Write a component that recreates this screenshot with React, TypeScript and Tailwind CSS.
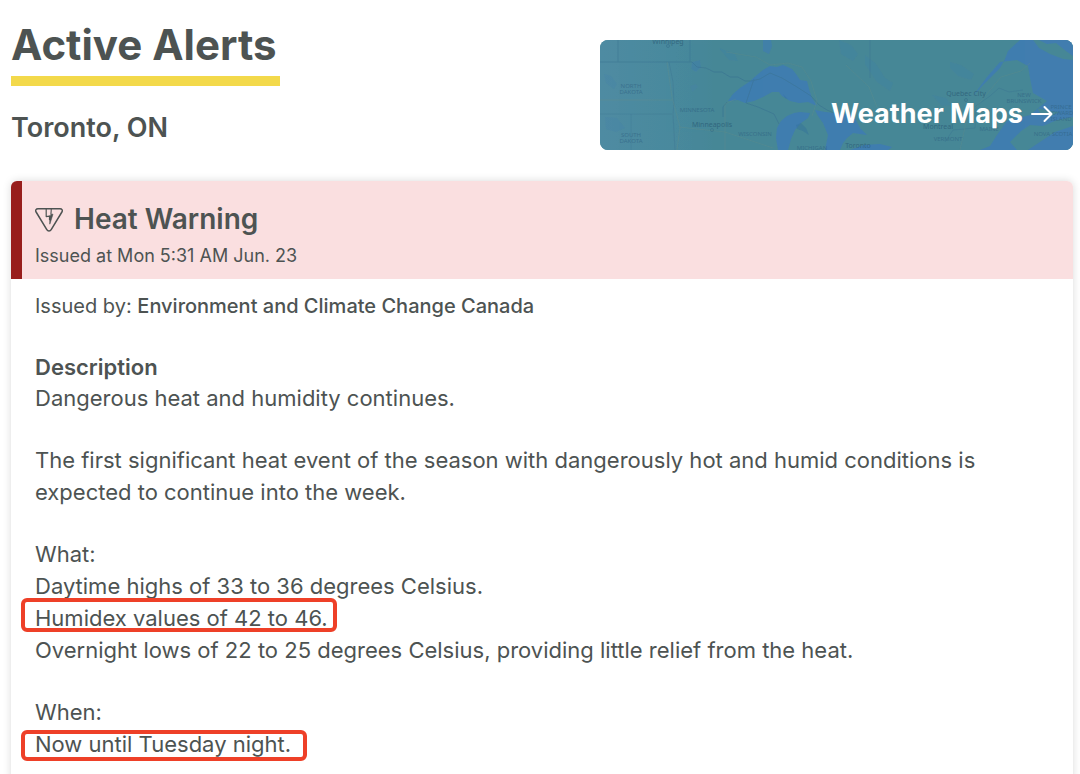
type AlertSection = {
  id: string;
  lines: { text: string; marked?: string }[];
};

const sections: AlertSection[] = [
  {
    id: "event",
    lines: [
      {
        text: "The first significant heat event of the season with dangerously hot and humid conditions is expected to continue into the week.",
      },
    ],
  },
  {
    id: "what",
    lines: [
      { text: "What:" },
      { text: "Daytime highs of 33 to 36 degrees Celsius." },
      {
        text: "Humidex values of 42 to 46.",
        marked: "-top-1 bottom-0.5 w-[316px]",
      },
      {
        text: "Overnight lows of 22 to 25 degrees Celsius, providing little relief from the heat.",
      },
    ],
  },
  {
    id: "when",
    lines: [
      { text: "When:" },
      {
        text: "Now until Tuesday night.",
        marked: "top-0.5 -bottom-px w-[286px]",
      },
    ],
  },
];

function MapBackdrop() {
  return (
    <svg
      aria-hidden="true"
      viewBox="0 0 473 110"
      preserveAspectRatio="xMidYMid slice"
      className="absolute inset-0 h-full w-full"
    >
      <defs>
        <linearGradient id="land" x1="0" x2="1">
          <stop offset="0" stopColor="#4f8ba2" />
          <stop offset="0.16" stopColor="#4a899d" />
          <stop offset="0.24" stopColor="#478797" />
          <stop offset="1" stopColor="#478797" />
        </linearGradient>
      </defs>
      <rect width="473" height="110" fill="url(#land)" />

      {/* lakes and sea */}
      <g fill="#417eb0">
        <path d="M128 61l5-7 7-6 9-6 8-7 6-5 7-4 7 1 6-2 9 4 4 5 4 6 7 1 2 8 3 9 5 8-9-4-9 1-9-2-8-5-3-4-7 0-9 5-9 4-9 2-7-3z" />
        <path d="M178 110l-2-12 1-10 4-7 6-5 7-3 6-1 10 1-2 5-7 5-6 7-4 9-3 11z" />
        <path d="M215 70l10 2 10 1 18 2 4 7 3 6 7 7-14-2-6 5-4 5-3 7h-15l3-15-5-12-5-7z" />
        <path d="M163 0h8l1 6-3 8-6-3z" opacity=".7" />
        <path d="M92 22l8-2 1 7-5 5-5-3z" opacity=".4" />
        <path d="M250 110l14-5 16-1 12 3-4 3z" />
        <path d="M373 56l11-12 10-10 6-6 5-9 3-8 12-11h53v110h-93l10-4 7-11 10-14 23-6 17-14-14-8-3-15-2-12-11-6-17 2-13 15z" />
      </g>
      <g fill="#478797">
        <path d="M433 0h6l8 4 9-1 10 8 7 5v4l-10-1-13-5-11-6z" />
        <path d="M410 102l11-11 9-6 13 1 14-6 16-3v9l-18 6-15 10-12 8h-11z" />
        <path d="M437 68l12 3 10 1-7 4-12-3z" />
      </g>
      <g fill="#417eb0" opacity=".2">
        <path d="M5 77l12 1 8 10-9 4-10-3z M4 34l7 2 6 8-3 5-8-6z M90 46l6-2 2 3-6 5z M119 8l16 6 3 7-9-1z M239 0l12 5 7 9-5 7-12-7z M265 15l11 9 9 14 8 5-3 8-13-9-12-18z M350 22l11 3 13 9-3 6-13-4-8-8z M332 55l14 3 5 7-9 1z" />
      </g>
      <path d="M183 54l5 5-3-1z M196 85l5-2 5 5 3 7-6-4-6-2z" fill="#32719a" opacity=".4" />

      {/* borders and roads */}
      <g fill="none" stroke="#39728f" strokeWidth="1" opacity=".5">
        <path d="M0 22h92l5 5 9 1 8 4 8 0 8 5 8 0 7 4h6l9-2 10-6 12 5 15 9 14 9 8 9 8 5 11 5" />
        <path d="M18 0v22 M90 0v22 M146 63l12 4 16 7 5 10 M154 39l-8 24 M127 62l-4 5v10" />
        <path d="M0 74h72 M31 74v36 M69 22l4 20 1 22-1 10 2 36 M270 0v38 M345 102l8-12 22-2 1-22 14-10 9-8 10 4 14-2" opacity=".6" />
      </g>
      <g fill="none" stroke="#6d9184" strokeWidth="1" opacity=".28">
        <path d="M67 22l5 35 8 30-3 23 M125 110V64l11-5 M72 60H0 M212 76l5-15-6-20-9-14-14-4-18 2-14-8-30-5 M246 25l23 22 12 30 M360 110l7-32 19-23 15-18 20-6 9-8 M173 108l-48-16-46-5" />
      </g>

      {/* place names */}
      <g
        fill="#2f6281"
        fontFamily="'Noto Sans', sans-serif"
        fontSize="6"
        textAnchor="middle"
        opacity=".6"
      >
        <g fontSize="7" fill="#26546f">
          <text x="68" y="4">Winnipeg</text>
          <text x="112" y="87">Minneapolis</text>
          <text x="366" y="56">Quebec City</text>
          <text x="338" y="89">Montreal</text>
          <text x="258" y="108">Toronto</text>
        </g>
        <text x="31" y="48">NORTH</text>
        <text x="31" y="54">DAKOTA</text>
        <text x="31" y="97">SOUTH</text>
        <text x="31" y="103">DAKOTA</text>
        <text x="97" y="72">MINNESOTA</text>
        <text x="155" y="96">WISCONSIN</text>
        <text x="212" y="110">MICHIGAN</text>
        <text x="348" y="101">VERMONT</text>
        <text x="389" y="91">MAINE</text>
        <text x="424" y="57">NEW</text>
        <text x="424" y="63">BRUNSWICK</text>
        <text x="461" y="69">PRINCE</text>
        <text x="461" y="75">EDWARD</text>
        <text x="461" y="81">ISLAND</text>
        <text x="453" y="96">NOVA SCOTIA</text>
      </g>
      <g fill="none" stroke="#2f6281" opacity=".4">
        <circle cx="68" cy="6" r="1.5" />
        <circle cx="112" cy="90" r="1.5" />
        <circle cx="366" cy="60" r="1.5" />
      </g>
    </svg>
  );
}

function WarningIcon() {
  return (
    <svg
      aria-hidden="true"
      viewBox="0 0 28 26"
      className="h-[26px] w-7 shrink-0"
      fill="none"
      stroke="#4d5352"
      strokeLinejoin="round"
    >
      <path
        d="M3 2.700h22c2 0 2.900 1.700 1.900 3.300L16.200 23.700c-1 1.700-3.400 1.700-4.400 0L1.100 6C.1 4.400 1 2.700 3 2.700z"
        strokeWidth="1.500"
      />
      <path d="M11.200 3v7.600l3.300-.5v4" strokeWidth="1.200" />
      <path
        d="M16.400 3l-.4 5.200h2l-3.200 10-.2-8.400 1.200-.4.300-6.400z"
        fill="#4d5352"
        strokeWidth=".6"
      />
    </svg>
  );
}

function ArrowIcon() {
  return (
    <svg
      aria-hidden="true"
      viewBox="0 0 22 18"
      className="h-[18px] w-[22px]"
      fill="none"
      stroke="currentColor"
      strokeWidth="2"
      strokeLinecap="round"
      strokeLinejoin="round"
    >
      <path d="M1 9h19.500M13.500 2l7 7-7 7" />
    </svg>
  );
}

export default function App() {
  return (
    <main className="min-h-screen bg-white pr-[7px] pl-[11px] font-['Inter',sans-serif] text-[#4d5352]">
      <header className="flex items-start justify-between gap-6 pt-5">
        <div>
          <h1 className="border-b-10 border-[#f3d94b] pr-[3px] pb-1.5 text-[42px] leading-[50px] font-bold">
            Active Alerts
          </h1>
          <p className="mt-6 text-[27px] leading-9 font-semibold">
            Toronto, ON
          </p>
        </div>
        <a
          href="#maps"
          className="relative mt-5 flex h-[110px] w-[473px] items-end justify-end overflow-hidden rounded-lg bg-[#478797] pr-5 pb-5 text-white"
        >
          <MapBackdrop />
          <span className="relative flex items-center gap-2 text-[27px] leading-8 font-bold">
            Weather Maps
            <ArrowIcon />
          </span>
        </a>
      </header>

      <article className="mt-[31px] overflow-hidden rounded-md shadow-[0_0_8px_rgba(0,0,0,0.15)]">
        <div className="h-[98px] border-l-11 border-[#981e1c] bg-[#fadfe0] pt-5 pl-[13px]">
          <h2 className="flex items-center gap-[11px] text-[28px] leading-9 font-semibold">
            <WarningIcon />
            Heat Warning
          </h2>
          <p className="mt-1 text-[18px] leading-[30px]">
            Issued at Mon 5:31 AM Jun. 23
          </p>
        </div>

        <div className="px-6 pt-[11px] pb-6 text-[22px] leading-8">
          <p className="text-[20px]">
            Issued by:{" "}
            <strong className="font-medium">
              Environment and Climate Change Canada
            </strong>
          </p>

          <h3 className="mt-[30px] leading-[30px] font-semibold">
            Description
          </h3>
          <div className="flex flex-col gap-[30px]">
            <p>Dangerous heat and humidity continues.</p>
            {sections.map((section) => (
              <div key={section.id}>
                {section.lines.map((line) => (
                  <p key={line.text} className="relative">
                    {line.text}
                    {line.marked && (
                      <span
                        className={`absolute -left-3.5 rounded-md border-4 border-[#ee4028] ${line.marked}`}
                      />
                    )}
                  </p>
                ))}
              </div>
            ))}
          </div>
        </div>
      </article>
    </main>
  );
}
